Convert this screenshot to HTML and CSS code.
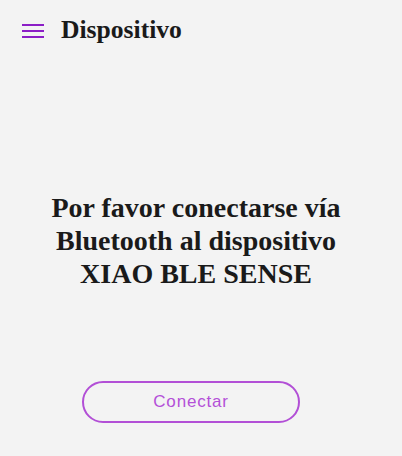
FILE: index.html
```html
<!DOCTYPE html>
<html lang="es">
<head>
<meta charset="utf-8">
<title>Dispositivo</title>
<link rel="stylesheet" href="styles.css">
</head>
<body>
<header class="topbar">
  <button class="menu" aria-label="Menú">
    <svg width="22" height="14" viewBox="0 0 22 14"><rect x="0" y="0" width="22" height="2" fill="#8b1ec6"/><rect x="0" y="6" width="22" height="2" fill="#8b1ec6"/><rect x="0" y="12" width="22" height="2" fill="#8b1ec6"/></svg>
  </button>
  <h1 class="title">Dispositivo</h1>
</header>
<main class="content">
  <h2 class="message">Por favor conectarse vía<br>Bluetooth al dispositivo<br>XIAO BLE SENSE</h2>
  <button class="connect">Conectar</button>
</main>
</body>
</html>
```
FILE: styles.css
```css
html, body {
  margin: 0;
  padding: 0;
  background: #f3f3f3;
}
body {
  width: 402px;
  height: 456px;
  overflow: hidden;
  font-family: "Liberation Serif", "Times New Roman", serif;
  color: #1a1a1a;
}
.topbar {
  display: flex;
  align-items: center;
  height: 60px;
  padding-left: 22px;
  box-sizing: border-box;
}
.menu {
  border: 0;
  background: none;
  padding: 0;
  width: 22px;
  height: 14px;
  display: flex;
  margin-top: 1px;
}
.title {
  margin: 0 0 0 17px;
  font-size: 25.6px;
  font-weight: bold;
}
.content {
  display: flex;
  flex-direction: column;
  align-items: center;
}
.message {
  margin: 131px 10px 0 0;
  font-size: 28px;
  line-height: 33px;
  text-align: center;
  font-weight: bold;
}
.connect {
  margin: 91px 20px 0 0;
  width: 218px;
  height: 42px;
  border: 2px solid #b24fd6;
  border-radius: 21px;
  background: transparent;
  color: #b450d8;
  font-family: "Liberation Sans", Arial, sans-serif;
  font-size: 17px;
  letter-spacing: 0.8px;
}
```
